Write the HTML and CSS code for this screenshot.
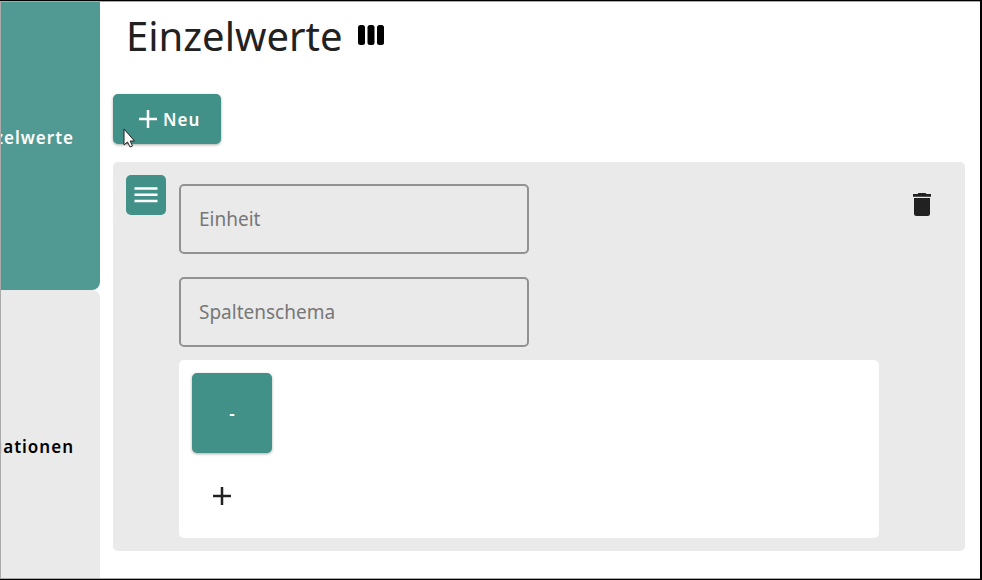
FILE: index.html
```html
<!DOCTYPE html>
<html lang="de">
<head>
<meta charset="utf-8">
<title>Einzelwerte</title>
<link rel="stylesheet" href="styles.css">
</head>
<body>
<div class="frame">
  <nav class="tabs">
    <button class="tab tab-active" type="button">Einzelwerte</button>
    <button class="tab tab-next" type="button">Situationen</button>
  </nav>
  <main class="content">
    <header class="heading">
      <h1>Einzelwerte</h1>
      <svg class="columns-icon" viewBox="0 0 26 20" aria-hidden="true"><rect width="7" height="20" rx="2.500"/><rect x="9.500" width="7" height="20" rx="2.500"/><rect x="19" width="7" height="20" rx="2.500"/></svg>
    </header>
    <button class="button new-button" type="button">
      <svg class="plus" viewBox="0 0 18 18" aria-hidden="true"><path d="M9 0v18M0 9h18"/></svg>
      <span>Neu</span>
    </button>
    <section class="card">
      <button class="button menu-button" type="button" aria-label="Menü">
        <svg class="menu-icon" viewBox="0 0 24 16" aria-hidden="true"><path d="M.5 1.500h23M.5 7.700h23M.5 13.900h23"/></svg>
      </button>
      <div class="form">
        <input class="field" type="text" placeholder="Einheit" aria-label="Einheit">
        <input class="field" type="text" placeholder="Spaltenschema" aria-label="Spaltenschema">
        <div class="schema">
          <button class="button tile" type="button">-</button>
          <button class="add-button" type="button" aria-label="Hinzufügen">
            <svg class="plus" viewBox="0 0 18 18" aria-hidden="true"><path d="M9 0v18M0 9h18"/></svg>
          </button>
        </div>
      </div>
      <button class="delete-button" type="button" aria-label="Löschen">
        <svg class="trash-icon" viewBox="0 0 18 24" aria-hidden="true"><path d="M4.500 1 5.500 0h7l1 1H18v2.700H0V1zM1 5h16v15.500a2.500 2.500 0 0 1-2.500 2.500h-11A2.500 2.500 0 0 1 1 20.500z"/></svg>
      </button>
    </section>
  </main>
  <svg class="cursor" viewBox="0 0 12 20" aria-hidden="true"><path d="M1 1v16l3.500-3 2.500 5 2.500-1-2.300-5H11.500z"/></svg>
</div>
</body>
</html>
```
FILE: styles.css
```css
* {
  box-sizing: border-box;
}

body {
  margin: 0;
  background: #000;
  color: #212121;
  font-family: "Noto Sans", "Open Sans", sans-serif;
}

button {
  border: 0;
  padding: 0;
  background: none;
  color: inherit;
  font: inherit;
}

svg {
  display: block;
}

.frame {
  position: relative;
  display: grid;
  grid-template-columns: 99px 1fr;
  min-height: 100vh;
  border: solid #000;
  border-width: 1px 2px 1px 0;
  background: #fff;
  box-shadow: inset 1px 1px #aaa, inset 0 -1px #aaa;
  padding: 1px 0 1px 1px;
}

.tabs {
  display: grid;
  grid-template-rows: 1fr 1fr;
}

.tab {
  display: flex;
  align-items: center;
  justify-content: flex-end;
  overflow: hidden;
  padding: 0 26px 18px 0;
  border-radius: 0 8px 8px 0;
  background: #eaeaea;
  color: #000;
  font-size: 17px;
  font-weight: 600;
  letter-spacing: 1px;
  white-space: nowrap;
}

.tab-active {
  border-top-right-radius: 0;
  background: #509a93;
  color: #fff;
}

.tab-next {
  padding: 24px 26px 0 0;
  border-bottom-right-radius: 0;
}

.content {
  padding: 8px 15px 27px 13px;
}

.heading {
  display: flex;
  align-items: center;
  gap: 16px;
  height: 52px;
  padding-left: 13px;
}

h1 {
  margin: 0;
  font-size: 40px;
  font-weight: 400;
  line-height: 52px;
}

.columns-icon {
  width: 26px;
  height: 20px;
  margin-bottom: 2px;
  fill: #000;
}

.button {
  display: flex;
  align-items: center;
  justify-content: center;
  border-radius: 5px;
  background: #419188;
  color: #fff;
}

.plus {
  width: 18px;
  height: 18px;
  fill: none;
  stroke: currentColor;
  stroke-width: 2.5;
}

.new-button {
  gap: 6px;
  height: 50px;
  margin-top: 32px;
  padding: 0 21px 0 26px;
  box-shadow: 0 1px 3px #0005;
  font-size: 17px;
  font-weight: 600;
  letter-spacing: 1px;
}

.card {
  display: flex;
  align-items: flex-start;
  gap: 13px;
  margin-top: 18px;
  padding: 13px;
  border-radius: 5px;
  background: #eaeaea;
}

.menu-button {
  width: 40px;
  height: 40px;
}

.menu-icon {
  width: 24px;
  height: 16px;
  fill: none;
  stroke: #fff;
  stroke-width: 2.5;
}

.form {
  flex: 1;
  padding-top: 9px;
}

.field {
  display: block;
  width: 50%;
  height: 70px;
  margin-bottom: 23px;
  padding: 0 18px;
  border: 2px solid #929292;
  border-radius: 5px;
  background: transparent;
  color: #212121;
  font: 19px "Noto Sans", "Open Sans", sans-serif;
}

.field::placeholder {
  color: #777;
  opacity: 1;
}

.field + .field {
  margin-bottom: 13px;
}

.schema {
  padding: 13px 13px 12px;
  border-radius: 5px;
  background: #fff;
}

.tile {
  width: 80px;
  height: 80px;
  box-shadow: 0 1px 3px #0005;
  font-size: 17px;
  font-weight: 600;
}

.add-button {
  display: grid;
  place-items: center;
  width: 60px;
  height: 60px;
  margin: 13px 0 0;
}

.delete-button {
  display: grid;
  place-items: center;
  width: 60px;
  height: 60px;
}

.trash-icon {
  width: 18px;
  height: 24px;
  fill: #212121;
}

.cursor {
  position: absolute;
  top: 127px;
  left: 123px;
  width: 12px;
  height: 20px;
  fill: #fff;
  stroke: #222;
  stroke-width: 1;
}
```
